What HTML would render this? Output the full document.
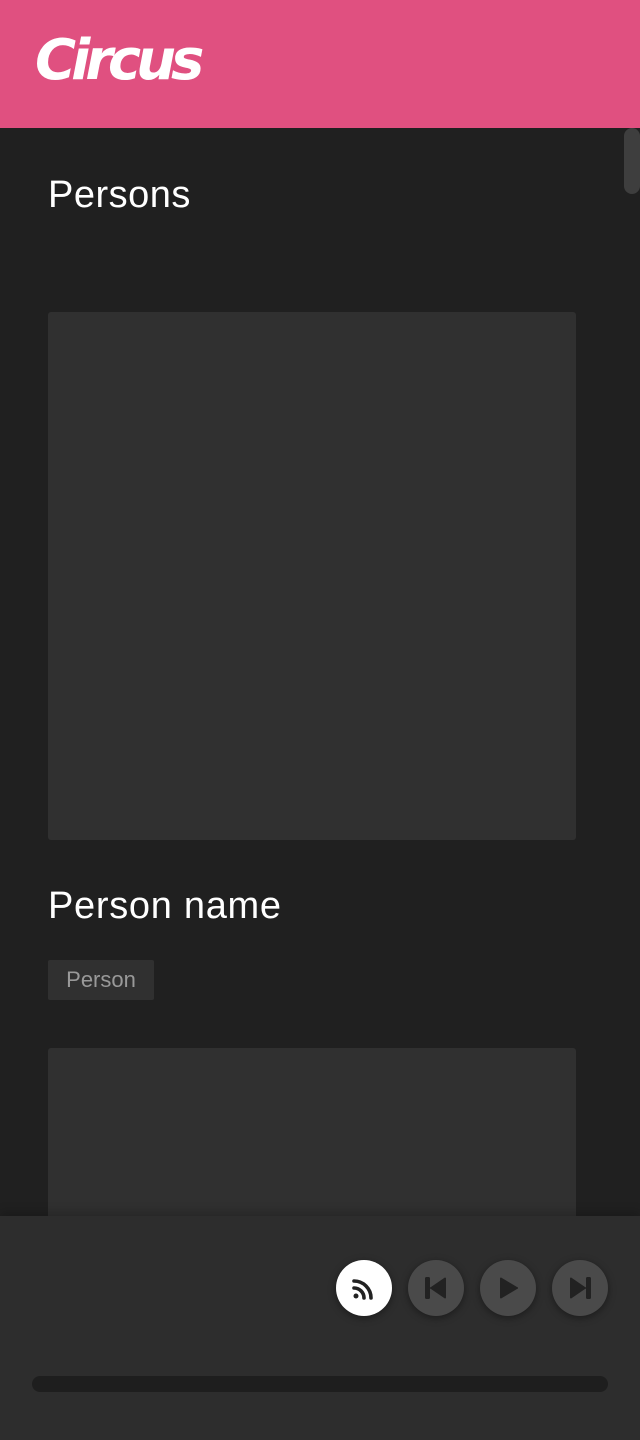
<!DOCTYPE html>
<html><head><meta charset="utf-8"><style>
*{margin:0;padding:0;box-sizing:border-box}
body{width:640px;height:1440px;background:#202020;font-family:"Liberation Sans",sans-serif;overflow:hidden;position:relative;color:#fff}
.hdr{position:absolute;left:0;top:0;width:640px;height:128px;background:#e05080}
.logo{position:absolute;left:35px;top:28px;font-family:"DejaVu Sans",sans-serif;font-weight:bold;font-style:italic;font-size:56px;letter-spacing:-5px;color:#fff}
.thumb{position:absolute;left:624px;top:128px;width:16px;height:66px;background:#3e3e3e;border-radius:8px}
h1{position:absolute;left:48px;top:174px;font-size:38px;font-weight:normal;letter-spacing:0.5px}
.card{position:absolute;left:48px;width:528px;background:#303030;border-radius:3px}
h2{position:absolute;left:48px;top:885px;font-size:38px;font-weight:normal;letter-spacing:0.7px}
.tag{position:absolute;left:48px;top:960px;width:106px;height:40px;background:#303030;border-radius:2px;color:#999;font-size:22px;line-height:40px;text-align:center}
.player{position:absolute;left:0;top:1216px;width:640px;height:224px;background:#2d2d2d;box-shadow:0 -4px 10px rgba(0,0,0,.2)}
.btn{position:absolute;top:44px;width:56px;height:56px;border-radius:50%;background:#4a4a4a;box-shadow:0 2px 8px rgba(0,0,0,.4)}
.btn svg{position:absolute;left:14px;top:14px}
.bar{position:absolute;left:32px;top:160px;width:576px;height:16px;border-radius:8px;background:#1e1e1e}
</style></head><body>
<div class="hdr"><div class="logo">Circus</div></div>
<div class="thumb"></div>
<h1>Persons</h1>
<div class="card" style="top:312px;height:528px"></div>
<h2>Person name</h2>
<div class="tag">Person</div>
<div class="card" style="top:1048px;height:200px"></div>
<div class="player">
<div class="btn" style="left:336px;background:#fff"><svg width="28" height="28" viewBox="0 0 28 28"><g fill="none" stroke="#222" stroke-width="3.6" stroke-linecap="round"><path d="M4 14a10 10 0 0 1 10 10"/><path d="M4 7a17 17 0 0 1 17 17"/></g><circle cx="6" cy="22" r="2.5" fill="#222"/></svg></div>
<div class="btn" style="left:408px"><svg width="28" height="28" viewBox="0 0 28 28"><rect x="3" y="3" width="5" height="22" rx="1.5" fill="#222"/><path d="M24 4.5v19a1 1 0 0 1-1.5.8L9 15a1 1 0 0 1 0-2l13.5-9.3a1 1 0 0 1 1.5.8z" fill="#222"/></svg></div>
<div class="btn" style="left:480px"><svg width="28" height="28" viewBox="0 0 28 28"><path d="M6 4.5v19a1 1 0 0 0 1.5.8L23 15a1 1 0 0 0 0-2L7.5 3.7A1 1 0 0 0 6 4.5z" fill="#222"/></svg></div>
<div class="btn" style="left:552px"><svg width="28" height="28" viewBox="0 0 28 28"><rect x="20" y="3" width="5" height="22" rx="1.5" fill="#222"/><path d="M4 4.5v19a1 1 0 0 0 1.5.8L19 15a1 1 0 0 0 0-2L5.5 3.7A1 1 0 0 0 4 4.5z" fill="#222"/></svg></div>
<div class="bar"></div>
</div>
</body></html>
